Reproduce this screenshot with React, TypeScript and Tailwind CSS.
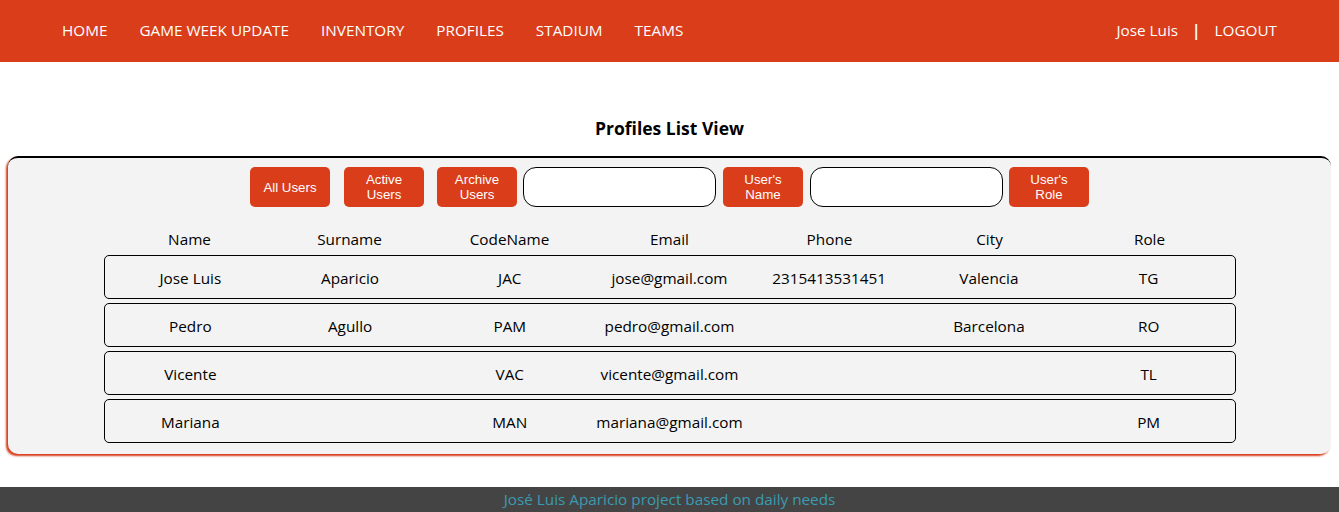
const navItems = ['HOME', 'GAME WEEK UPDATE', 'INVENTORY', 'PROFILES', 'STADIUM', 'TEAMS'];

const columns = ['Name', 'Surname', 'CodeName', 'Email', 'Phone', 'City', 'Role'];

const users = [
  ['Jose Luis', 'Aparicio', 'JAC', 'jose@gmail.com', '2315413531451', 'Valencia', 'TG'],
  ['Pedro', 'Agullo', 'PAM', 'pedro@gmail.com', '', 'Barcelona', 'RO'],
  ['Vicente', '', 'VAC', 'vicente@gmail.com', '', '', 'TL'],
  ['Mariana', '', 'MAN', 'mariana@gmail.com', '', '', 'PM'],
];

function RedButton({ children }: { children: React.ReactNode }) {
  return (
    <button className="w-[80px] h-[40px] rounded-[5px] bg-[#d93d1a] text-white text-[13.3px] leading-[15px] font-['Liberation_Sans',Arial,sans-serif] px-[12px]">
      {children}
    </button>
  );
}

function SearchInput() {
  return <input className="w-[193px] h-[40px] rounded-[13px] border border-black bg-white outline-none px-3" />;
}

export default function App() {
  return (
    <div className="min-h-[512px] flex flex-col bg-white text-black font-['Open_Sans','Noto_Sans',sans-serif]">
      <header className="h-[62px] bg-[#d93d1a] text-white flex items-center justify-between px-[62px] pb-[2px] text-[15.3px]">
        <nav className="flex gap-[32px]">
          {navItems.map((n) => (
            <a key={n} className="cursor-pointer">{n}</a>
          ))}
        </nav>
        <div className="flex items-center">
          <span>Jose Luis</span>
          <span className="mx-[14px] font-bold">|</span>
          <span>LOGOUT</span>
        </div>
      </header>

      <main className="flex-1 flex flex-col">
        <h1 className="text-center font-bold text-[17.5px] mt-[55px] mb-[17px] leading-[22px]">Profiles List View</h1>

        <section className="mx-[8px] rounded-[10px] bg-[#f3f3f3] border-t-2 border-black shadow-[-2px_2px_2px_#d93d1a] pt-[9px] pb-[11px]">
          <div className="flex justify-center items-center">
            <RedButton>All Users</RedButton>
            <div className="ml-[14px]"><RedButton>Active Users</RedButton></div>
            <div className="ml-[13px]"><RedButton>Archive Users</RedButton></div>
            <div className="ml-[6px]"><SearchInput /></div>
            <div className="ml-[7px]"><RedButton>User's Name</RedButton></div>
            <div className="ml-[7px]"><SearchInput /></div>
            <div className="ml-[6px]"><RedButton>User's Role</RedButton></div>
          </div>

          <div className="w-[1132px] mx-auto mt-[20px] text-[15.3px]">
            <div className="grid grid-cols-7 px-[6px] h-[24px] pt-[1px] items-center">
              {columns.map((c) => (
                <div key={c} className="text-center">{c}</div>
              ))}
            </div>
            <div className="flex flex-col gap-[4px] mt-[4px]">
              {users.map((u, i) => (
                <div key={i} className="grid grid-cols-7 px-[6px] h-[44px] pt-[3px] items-center border border-black rounded-[5px]">
                  {u.map((v, j) => (
                    <div key={j} className="text-center">{v}</div>
                  ))}
                </div>
              ))}
            </div>
          </div>
        </section>
      </main>

      <footer className="h-[25px] mt-[31px] bg-[#444444] text-[#3b9bb0] text-center text-[15.3px] leading-[25px]">
        José Luis Aparicio project based on daily needs
      </footer>
    </div>
  );
}
